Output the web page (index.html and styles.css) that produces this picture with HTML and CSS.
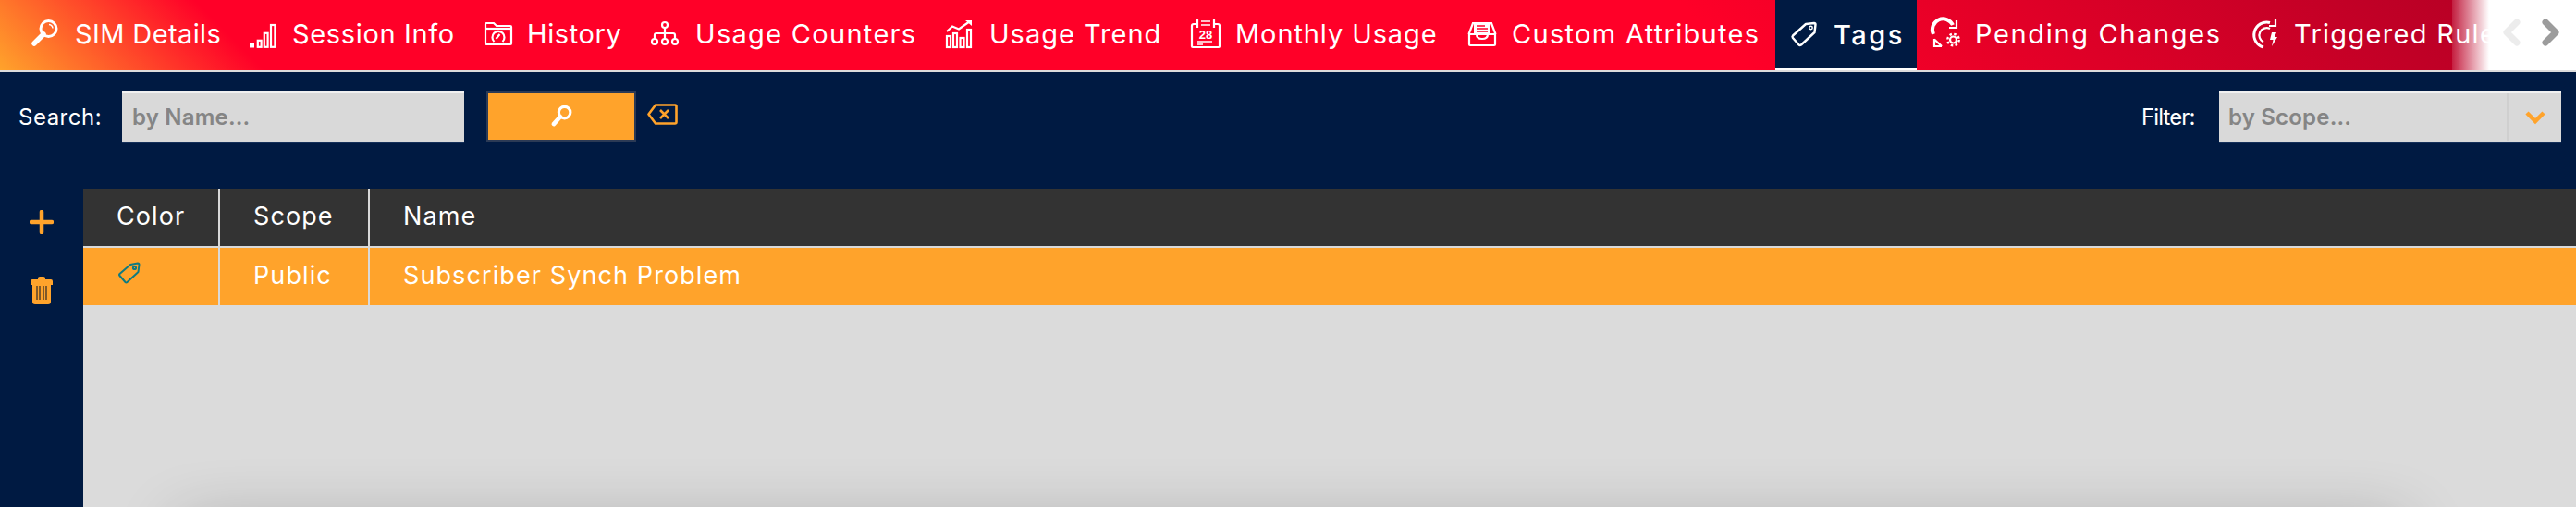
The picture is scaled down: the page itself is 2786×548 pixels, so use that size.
FILE: index.html
```html
<!DOCTYPE html>
<html lang="en">
<head>
<meta charset="utf-8">
<title>Tags</title>
<link rel="stylesheet" href="styles.css">
</head>
<body>
<div class="page">
  <nav class="tabs">
    <a class="tab">
      <svg class="ico" viewBox="0 0 32 32"><circle cx="19.500" cy="10" r="8.500" class="ln3"/><path d="M14 16 4 26" class="ln5"/><path d="M20 5.500a4.500 4.500 0 0 1 4 4" class="ln1"/></svg>
      <span class="lbl w-sim">SIM Details</span>
    </a>
    <a class="tab">
      <svg class="ico" viewBox="0 0 32 32"><rect x="2" y="26" width="5" height="4.500" class="fill"/><rect x="10.800" y="22.800" width="3.800" height="7" class="ln2"/><rect x="17.800" y="14.800" width="3.800" height="15" class="ln2"/><rect x="25" y="6" width="4.400" height="23.800" class="ln2"/></svg>
      <span class="lbl w-ses">Session Info</span>
    </a>
    <a class="tab">
      <svg class="ico" viewBox="0 0 32 32"><path d="M3 10V5q0-1 1-1h8l3 3h15q1 0 1 1v18q0 1-1 1H4q-1 0-1-1Z" class="ln2"/><path d="M3 10h28" class="ln2"/><path d="M12.500 24a6.500 6.500 0 1 1 9 0M14.500 21l4-5" class="ln2"/></svg>
      <span class="lbl w-his">History</span>
    </a>
    <a class="tab">
      <svg class="ico" viewBox="0 0 32 32"><circle cx="15" cy="6" r="3" class="ln2"/><path d="M15 9v12M4 21v-4q0-2 2-2h18q2 0 2 2v4" class="ln2"/><circle cx="4" cy="24" r="3" class="ln2"/><circle cx="15" cy="24" r="3" class="ln2"/><circle cx="26" cy="24" r="3" class="ln2"/></svg>
      <span class="lbl w-cou">Usage Counters</span>
    </a>
    <a class="tab">
      <svg class="ico" viewBox="0 0 32 32"><path d="M2 13 8 7.500l7 3L27 2" class="ln2"/><path d="M22 1h7v6Z" class="fill"/><rect x="2" y="18" width="4" height="12" class="ln2"/><rect x="9" y="15" width="4" height="15" class="ln2"/><rect x="16.500" y="20" width="4" height="10" class="ln2"/><rect x="24" y="11" width="4" height="19" class="ln2"/></svg>
      <span class="lbl w-tre">Usage Trend</span>
    </a>
    <a class="tab">
      <svg class="ico" viewBox="0 0 32 32"><path d="M6 5H3q-2 0-2 2v22q0 1 1 1h28q1 0 1-1V7q0-2-2-2h-3" class="ln2"/><path d="M7 0v9M25 0v9" class="ln2"/><path d="M11 2h10M11 6h10" class="ln1"/><text x="16" y="21" class="cal">28</text><path d="M7 24h16M7 27h6" class="ln1"/></svg>
      <span class="lbl w-mon">Monthly Usage</span>
    </a>
    <a class="tab">
      <svg class="ico" viewBox="0 0 32 32"><path d="M1.500 16 6 4h20l4.500 12" class="ln2"/><rect x="7" y="3" width="18" height="14" class="fill"/><path d="M10 7h9M10 10h12M10 13h12" class="ln1 red"/><path d="M2 16h8q0 5 6 5t6-5h8v11q0 1-1 1H3q-1 0-1-1Z" class="ln2"/></svg>
      <span class="lbl w-cus">Custom Attributes</span>
    </a>
    <a class="tab tab-on">
      <svg class="ico" viewBox="0 0 32 32"><path d="M18 5 27 4q1.500 0 1.500 1.500L27.500 14 13 27.500q-1.500 1-2.500 0L4 20q-1-1.500 0-2.500Z" class="ln2j"/><circle cx="23.500" cy="9" r="1.700" class="ln1"/></svg>
      <span class="lbl w-tag">Tags</span>
    </a>
    <a class="tab">
      <svg class="ico" viewBox="0 0 32 32"><path d="M3 16A11.500 11.500 0 0 1 24 6" class="ln4"/><path d="M28 1v8h-8" class="ln2"/><path d="M4 21.500 12 29M4 21v8h8" class="ln2"/><circle cx="24.500" cy="22" r="3.500" class="ln2"/><circle cx="24.500" cy="22" r="6.200" class="gear"/></svg>
      <span class="lbl w-pen">Pending Changes</span>
    </a>
    <a class="tab">
      <svg class="ico" viewBox="0 0 32 32"><path d="M22 3.500A13.500 13.500 0 0 0 15 30" class="ln3"/><path d="M22 10A8 8 0 0 0 15 24.500" class="ln2"/><path d="M21 7h7V0" class="ln2"/><path d="M24 14h5l-2 5h3l-6 10 1.500-7H22Z" class="fill"/></svg>
      <span class="lbl w-tri">Triggered Rules</span>
    </a>
    <div class="tab-arrows">
      <svg class="arrow" viewBox="0 0 20 30"><path d="M16 4 5 15l11 11" class="chev off"/></svg>
      <svg class="arrow" viewBox="0 0 20 30"><path d="M4 4l11 11L4 26" class="chev"/></svg>
    </div>
  </nav>

  <section class="toolbar">
    <div class="tool-group">
      <label class="tool-label lab-search">Search:</label>
      <div class="field field-name"><span class="ph">by Name...</span></div>
      <button class="find">
        <svg class="find-ico" viewBox="0 0 32 32"><circle cx="20" cy="11" r="8" class="ln4"/><path d="M14 17 5 27" class="ln6"/></svg>
      </button>
      <svg class="clear" viewBox="0 0 33 23"><path d="M9 1.500h21q1.500 0 1.500 1.500v17q0 1.500-1.500 1.500H9L1.500 11.500Z" class="or2"/><path d="M14 7l9 9M23 7l-9 9" class="or2"/></svg>
    </div>
    <div class="tool-group">
      <label class="tool-label lab-filter">Filter:</label>
      <div class="field field-scope">
        <span class="ph">by Scope...</span>
        <span class="drop"><svg class="drop-ico" viewBox="0 0 24 16"><path d="M3 3l9 9 9-9" class="or4"/></svg></span>
      </div>
    </div>
  </section>

  <main class="main">
    <aside class="side">
      <svg class="side-plus" viewBox="0 0 26 26"><path d="M13 2v22M2 13h22" class="or3"/></svg>
      <svg class="side-trash" viewBox="0 0 24 30"><path d="M8 2q0-2 2-2h4q2 0 2 2v1h6q2 0 2 2v4H0V5q0-2 2-2h6Z" class="or-fill"/><path d="M2 8h20v19q0 3-3 3H5q-3 0-3-3Z" class="or-fill"/><path d="M7 10v15M10 10v15M14 10v15M17 10v15" class="stripe"/></svg>
    </aside>
    <div class="grid">
      <div class="row row-head">
        <div class="cell">Color</div>
        <div class="cell">Scope</div>
        <div class="cell cell-last">Name</div>
      </div>
      <div class="row row-sel">
        <div class="cell cell-icon"><svg class="tag-ico" viewBox="0 0 24 24"><path d="M13 3 21 1.500q1.500 0 1.500 1.500L21.500 11 9.500 22q-1 1-2 0L1.500 15q-1-1 0-2Z" class="teal"/><circle cx="17.500" cy="6.500" r="1.600" class="teal"/></svg></div>
        <div class="cell">Public</div>
        <div class="cell cell-last">Subscriber Synch Problem</div>
      </div>
      <div class="grid-body"></div>
    </div>
  </main>
</div>
</body>
</html>
```

FILE: styles.css
```css
* { box-sizing: border-box; }
html, body { margin: 0; padding: 0; }
body { background: #001a42; font-family: Inter, "Liberation Sans", sans-serif; color: #fff; }
.page { width: 2786px; height: 548px; overflow: hidden; display: flex; flex-direction: column; background: #001a42; }

/* tabs */
.tabs {
  position: relative; flex: none; height: 78px; padding-left: 18px; display: flex; overflow: hidden;
  border-bottom: 2px solid #dcdcdc;
  background: linear-gradient(45deg, #ffa32b 0, #ff0028 10%, #ff0028 66%, #c00026 92%, #b00024 100%);
}
.tab { flex: none; height: 76px; display: flex; align-items: center; padding: 0 17px 3px 15px; white-space: nowrap; }
.tab-on { background: #001a42; height: 78px; border-bottom: 4px solid #fff; padding-bottom: 0; }
.tab-on .lbl { font-weight: 500; }
.ico { width: 32px; height: 32px; margin-right: 16px; flex: none; overflow: visible; }
.lbl { font-size: 29px; }
.w-sim { width: 155px; letter-spacing: .4px; }
.w-ses { width: 174px; letter-spacing: .65px; }
.w-his { width: 102px; letter-spacing: .6px; }
.w-cou { width: 238px; letter-spacing: 1.300px; }
.w-tre { width: 186px; letter-spacing: 1px; }
.w-mon { width: 219px; letter-spacing: .9px; }
.w-cus { width: 268px; letter-spacing: 1.300px; }
.w-tag { width: 73px; letter-spacing: 2.500px; }
.w-pen { width: 265px; letter-spacing: 1.650px; }
.w-tri { letter-spacing: 1.300px; }
.tab-arrows {
  position: absolute; top: 0; right: 0; bottom: 0; width: 134px; padding: 20px 17px 0 54px;
  display: flex; justify-content: space-between; align-items: flex-start;
  background: linear-gradient(90deg, rgba(255,255,255,.12) 0, #fff 40px);
}
.arrow { width: 20px; height: 30px; }
.chev { fill: none; stroke: #9c9c9c; stroke-width: 7; stroke-linecap: round; stroke-linejoin: round; }
.chev.off { stroke: #ececec; }

/* icon strokes */
.ln1, .ln2, .ln2j, .ln3, .ln4, .ln5, .ln6, .gear { fill: none; stroke: #fff; }
.ln1 { stroke-width: 1.500; } .ln2 { stroke-width: 2.200; } .ln2j { stroke-width: 2.400; stroke-linejoin: round; }
.ln3 { stroke-width: 3; } .ln4 { stroke-width: 4; } .ln5 { stroke-width: 5.500; stroke-linecap: round; } .ln6 { stroke-width: 6; stroke-linecap: round; }
.gear { stroke-width: 2.400; stroke-dasharray: 2.500 2.370; }
.fill { fill: #fff; }
.red { stroke: #ff0028; }
.cal { font: 700 13px "Liberation Sans", sans-serif; fill: #fff; text-anchor: middle; }

/* toolbar */
.toolbar { flex: none; height: 126px; padding: 20px 16px 0 20px; display: flex; justify-content: space-between; align-items: flex-start; }
.tool-group { display: flex; align-items: center; height: 57px; }
.tool-label { font-size: 24px; }
.lab-search { width: 112px; letter-spacing: .5px; }
.lab-filter { width: 84px; letter-spacing: -.9px; }
.field { height: 57px; background: #d9d9d9; border-top: 2px solid #f1f1f1; border-bottom: 2px solid #15305a; display: flex; align-items: center; color: #858585; font-size: 24px; font-weight: 600; letter-spacing: .2px; }
.field-name { width: 370px; padding-left: 11px; }
.field-scope { width: 370px; padding-left: 10px; }
.ph { flex: 1; }
.find { width: 162px; height: 55px; margin: 0 12px 2px 24px; border: 2px solid #2b3a55; background: #ffa32b; padding: 0; display: flex; align-items: center; justify-content: center; }
.find-ico { width: 25px; height: 25px; }
.clear { width: 33px; height: 23px; margin-bottom: 6px; }
.or2, .or3, .or4 { fill: none; stroke: #ffa32b; }
.or2 { stroke-width: 2.600; stroke-linejoin: round; }
.or3 { stroke-width: 4.500; stroke-linecap: round; }
.or4 { stroke-width: 4.500; }
.or-fill { fill: #ffa32b; }
.drop { width: 59px; height: 51px; border-left: 2px solid #cfcfcf; display: flex; align-items: center; justify-content: center; }
.drop-ico { width: 24px; height: 16px; }

/* main */
.main { flex: 1; display: flex; min-height: 0; }
.side { flex: none; width: 90px; padding: 23px 0 0 32px; display: flex; flex-direction: column; align-items: flex-start; gap: 46px; }
.side-plus { width: 26px; height: 26px; }
.side-trash { width: 24px; height: 30px; margin-left: 1px; }
.stripe { fill: none; stroke: #4a3a2a; stroke-width: 1.400; }
.grid { flex: 1; display: flex; flex-direction: column; min-width: 0; background: #dbdbdb; }
.row { flex: none; height: 64px; display: grid; grid-template-columns: 148px 162px 1fr; font-size: 27px; letter-spacing: 1.100px; border-bottom: 2px solid #d9d9d9; }
.row-head { background: #333; }
.row-sel { background: #ffa32b; height: 62px; border-bottom: 0; }
.cell { display: flex; align-items: center; padding: 0 0 4px 36px; border-right: 2px solid #d9d9d9; }
.cell-last { border-right: 0; }
.cell-icon { padding-bottom: 0; }
.tag-ico { width: 24px; height: 24px; margin: 0 0 8px 2px; }
.teal { fill: none; stroke: #0f7a80; stroke-width: 2; stroke-linejoin: round; }
.grid-body { flex: 1; position: relative; overflow: hidden; }
.grid-body::after { content: ""; position: absolute; left: 105px; right: 186px; top: 240px; height: 40px; box-shadow: 0 0 70px rgba(0,0,0,.3); }
```
